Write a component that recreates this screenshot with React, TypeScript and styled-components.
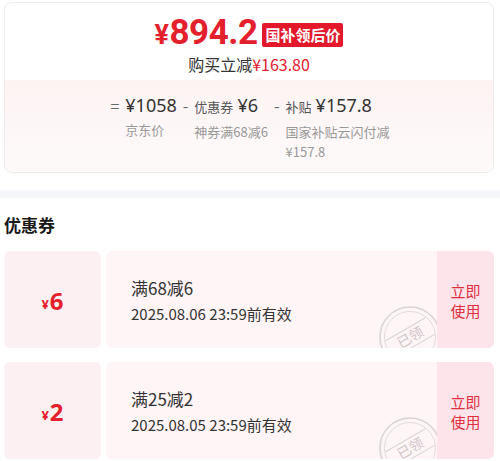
import React from "react";
import styled, { createGlobalStyle } from "styled-components";

const GlobalStyle = createGlobalStyle`
  html, body {
    margin: 0;
    padding: 0;
    background: #fff;
  }
  body {
    width: 500px;
    font-family: "Noto Sans CJK SC", "Noto Sans", sans-serif;
    color: #333;
  }
`;

const RED = "#e4202c";

const Page = styled.div`
  width: 500px;
  height: 461px;
  overflow: hidden;
  padding-top: 2px;
  box-sizing: border-box;
`;

const PriceCard = styled.div`
  margin: 0 6px 0 4px;
  height: 171px;
  box-sizing: border-box;
  border: 1px solid #f0e9ea;
  border-radius: 8px;
  overflow: hidden;
  display: flex;
  flex-direction: column;
`;

const PriceTop = styled.div`
  padding: 12px 0 5px;
  display: flex;
  flex-direction: column;
  align-items: center;
  background: #fff;
`;

const PriceRow = styled.div`
  display: flex;
  align-items: center;
  height: 38px;
`;

const BigPrice = styled.span`
  font-family: "Roboto", "Noto Sans", sans-serif;
  font-weight: 700;
  color: ${RED};
  font-size: 35px;
  letter-spacing: -0.5px;
  line-height: 38px;
  .yen {
    font-size: 27px;
    margin-right: 1px;
  }
`;

const Badge = styled.span`
  margin-left: 5px;
  margin-top: 2px;
  background: #e3182b;
  color: #fff;
  font-size: 15px;
  font-weight: 700;
  line-height: 24px;
  padding: 0 3px;
  border-radius: 2px;
`;

const SaveLine = styled.div`
  font-size: 16px;
  line-height: 22px;
  color: #333;
  span {
    color: ${RED};
  }
`;

const Breakdown = styled.div`
  position: relative;
  flex: 1;
  padding: 12px 0;
  display: flex;
  justify-content: center;
  align-items: flex-start;
  background: linear-gradient(180deg, #fdf3f3 0%, #fefafa 100%);
  &::before {
    content: "";
    position: absolute;
    top: -4px;
    left: 250px;
    border: 4px solid transparent;
    border-top: 0;
    border-bottom-color: #fdf3f3;
  }
`;

const Op = styled.span`
  font-size: 16px;
  line-height: 26px;
  color: #666;
  margin: 0 6px;
`;

const Col = styled.div<{ $max?: number }>`
  display: flex;
  flex-direction: column;
  max-width: ${(p) => (p.$max ? `${p.$max}px` : "none")};
`;

const Value = styled.div`
  line-height: 26px;
  white-space: nowrap;
  color: #333;
  font-size: 18px;
  font-family: "Noto Sans", "Noto Sans CJK SC", sans-serif;
  .tag {
    font-family: "Noto Sans CJK SC", sans-serif;
    font-size: 13px;
    color: #555;
    margin-right: 4px;
  }
`;

const Label = styled.div`
  margin-top: 2px;
  font-size: 13px;
  line-height: 20px;
  color: #999;
`;

const Band = styled.div`
  margin-top: 17px;
  height: 8px;
  background: #f5f6fa;
`;

const Heading = styled.h2`
  margin: 13px 0 12px 4px;
  font-size: 17px;
  line-height: 28px;
  font-weight: 700;
  color: #1a1a1a;
`;

const CouponList = styled.div`
  display: flex;
  flex-direction: column;
  gap: 14px;
  margin: 0 6px 0 4px;
`;

const Coupon = styled.div`
  display: flex;
  height: 97px;
  gap: 5px;
`;

const Amount = styled.div`
  position: relative;
  width: 97px;
  flex-shrink: 0;
  background: #fcf0f2;
  border-radius: 6px;
  display: flex;
  align-items: center;
  justify-content: center;
  color: ${RED};
  font-weight: 700;
  font-family: "Noto Sans", sans-serif;
  font-size: 24px;
  padding-top: 2px;
  box-sizing: border-box;
  .yen {
    font-size: 13px;
    margin-top: 6px;
    margin-right: 1px;
  }
  &::before,
  &::after {
    content: "";
    position: absolute;
    right: -7px;
    width: 9px;
    height: 9px;
    border-radius: 50%;
    background: #fff;
  }
  &::before {
    top: -5px;
  }
  &::after {
    bottom: -5px;
  }
`;

const Body = styled.div`
  position: relative;
  flex: 1;
  overflow: hidden;
  background: #fff4f6;
  border-radius: 6px 0 0 6px;
  padding-left: 25px;
  display: flex;
  flex-direction: column;
  justify-content: center;
  padding-top: 2px;
`;

const Title = styled.div`
  font-size: 17px;
  line-height: 26px;
  color: #333;
`;

const Expire = styled.div`
  font-size: 15px;
  line-height: 26px;
  color: #333;
`;

const Stamp = styled.svg`
  position: absolute;
  right: -5px;
  bottom: -21px;
`;

const UseButton = styled.div`
  width: 57px;
  flex-shrink: 0;
  margin-left: -5px;
  background: #fde4ea;
  border-radius: 0 6px 6px 0;
  display: flex;
  align-items: center;
  justify-content: center;
  text-align: center;
  color: #e0303f;
  font-size: 15px;
  line-height: 20px;
  padding-top: 2px;
  box-sizing: border-box;
`;

const ClaimedStamp: React.FC = () => (
  <Stamp width="64" height="64" viewBox="0 0 64 64">
    <circle cx="32" cy="32" r="30" fill="none" stroke="#dcd3d5" strokeWidth="1.6" />
    <circle cx="32" cy="32" r="25.5" fill="none" stroke="#e2dadc" strokeWidth="1" />
    <g transform="rotate(-30 32 32)">
      <line x1="9" y1="23" x2="55" y2="23" stroke="#dcd3d5" strokeWidth="1" />
      <line x1="9" y1="42" x2="55" y2="42" stroke="#dcd3d5" strokeWidth="1" />
      <text
        x="32"
        y="37.5"
        textAnchor="middle"
        fontSize="14"
        fill="#cfc6c8"
        fontFamily="Noto Sans CJK SC, sans-serif"
      >
        已领
      </text>
    </g>
  </Stamp>
);

interface CouponData {
  amount: number;
  title: string;
  expire: string;
}

const coupons: CouponData[] = [
  { amount: 6, title: "满68减6", expire: "2025.08.06 23:59前有效" },
  { amount: 2, title: "满25减2", expire: "2025.08.05 23:59前有效" },
];

const App: React.FC = () => {
  return (
    <Page>
      <GlobalStyle />
      <PriceCard>
        <PriceTop>
          <PriceRow>
            <BigPrice>
              <span className="yen">¥</span>894.2
            </BigPrice>
            <Badge>国补领后价</Badge>
          </PriceRow>
          <SaveLine>
            购买立减<span>¥163.80</span>
          </SaveLine>
        </PriceTop>
        <Breakdown>
          <Op>=</Op>
          <Col>
            <Value>¥1058</Value>
            <Label>京东价</Label>
          </Col>
          <Op>-</Op>
          <Col>
            <Value>
              <span className="tag">优惠券</span>¥6
            </Value>
            <Label>神券满68减6</Label>
          </Col>
          <Op>-</Op>
          <Col $max={108}>
            <Value>
              <span className="tag">补贴</span>¥157.8
            </Value>
            <Label>国家补贴云闪付减¥157.8</Label>
          </Col>
        </Breakdown>
      </PriceCard>
      <Band />
      <Heading>优惠券</Heading>
      <CouponList>
        {coupons.map((c) => (
          <Coupon key={c.title}>
            <Amount>
              <span className="yen">¥</span>
              {c.amount}
            </Amount>
            <Body>
              <Title>{c.title}</Title>
              <Expire>{c.expire}</Expire>
              <ClaimedStamp />
            </Body>
            <UseButton>
              立即
              <br />
              使用
            </UseButton>
          </Coupon>
        ))}
      </CouponList>
    </Page>
  );
};

export default App;
